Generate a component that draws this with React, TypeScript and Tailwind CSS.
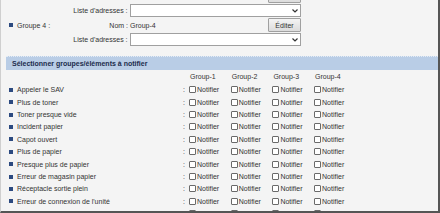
import React from "react";

const rows = [
  "Appeler le SAV",
  "Plus de toner",
  "Toner presque vide",
  "Incident papier",
  "Capot ouvert",
  "Plus de papier",
  "Presque plus de papier",
  "Erreur de magasin papier",
  "Réceptacle sortie plein",
  "Erreur de connexion de l'unité",
  "Erreur unité Recto/Verso",
];

function Bullet() {
  return <span className="inline-block w-[4px] h-[4px] bg-[#2c4a80] shrink-0" />;
}

function Select() {
  return (
    <div className="ml-[2px] w-[172px] h-[13px] bg-white border border-[#a0a0a0] flex items-center justify-end pr-[2px]">
      <svg width="6" height="4" viewBox="0 0 6 4">
        <polyline points="0.5,0.5 3,3 5.5,0.5" fill="none" stroke="#333" strokeWidth="1.2" />
      </svg>
    </div>
  );
}

function Button({ label }: { label: string }) {
  return (
    <div className="w-[33px] h-[14px] border border-[#a0a0a0] bg-gradient-to-b from-[#f4f4f4] to-[#dcdcdc] rounded-[1px] flex items-center justify-center text-[#333]">
      {label}
    </div>
  );
}

function Check() {
  return <span className="inline-block w-[7px] h-[7px] bg-white border border-[#6a6a6a] rounded-[1px] shrink-0" />;
}

export default function App() {
  return (
    <div className="w-[440px] h-[213px] overflow-hidden bg-[#f4f4f4] border-l border-l-[#cfcfcf] border-r-2 border-r-[#555] border-b-2 border-b-[#555] text-[7px] leading-none text-[#333] font-['Liberation_Sans',Arial,sans-serif]">
      <div className="-mt-[11px] h-[14px] w-[300px] flex justify-end">
        <Button label="Éditer" />
      </div>
      <div className="mt-[1px] flex items-center w-[300px]">
        <div className="w-[127px] text-right">Liste d'adresses :</div>
        <Select />
      </div>
      <div className="mt-[1px] h-[14px] flex items-center w-[300px]">
        <div className="w-[127px] flex items-center">
          <div className="ml-[8px] flex items-center gap-[4px]">
            <Bullet />
            <span>Groupe 4 :</span>
          </div>
          <span className="ml-auto">Nom :</span>
        </div>
        <span className="ml-[2px]">Group-4</span>
        <div className="ml-auto">
          <Button label="Éditer" />
        </div>
      </div>
      <div className="mt-[1px] flex items-center w-[300px]">
        <div className="w-[127px] text-right">Liste d'adresses :</div>
        <Select />
      </div>
      <div className="mt-[10px] ml-[5px] h-[14px] bg-[#b9cde6] border-t border-dotted border-t-[#e4ecf6] flex items-center pl-[6px] font-bold text-[#1c2c4c]">
        Sélectionner groupes/éléments à notifier
      </div>
      <div className="h-[13.6px] flex items-center pl-[188px]">
        {["Group-1", "Group-2", "Group-3", "Group-4"].map((g) => (
          <div key={g} className="w-[41.7px] pl-[1px]">
            {g}
          </div>
        ))}
      </div>
      {rows.map((r) => (
        <div key={r} className="h-[12.4px] flex items-center">
          <div className="ml-[8px] w-[174px] flex items-center gap-[4px]">
            <Bullet />
            <span>{r}</span>
          </div>
          <span className="w-[6px]">:</span>
          {[0, 1, 2, 3].map((i) => (
            <div key={i} className="w-[41.7px] flex items-center">
              <Check />
              <span className="ml-[1px]">Notifier</span>
            </div>
          ))}
        </div>
      ))}
    </div>
  );
}
